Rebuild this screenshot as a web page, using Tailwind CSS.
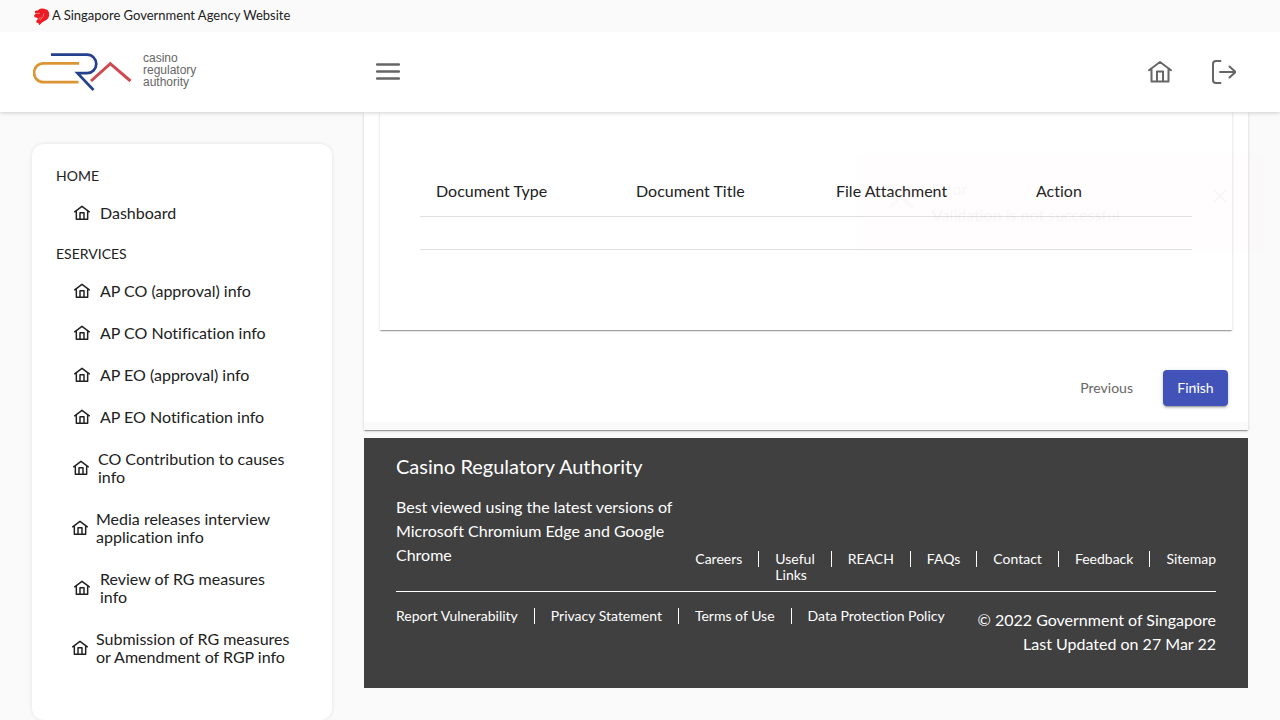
<!DOCTYPE html>
<html lang="en">
<head>
<meta charset="utf-8">
<meta name="viewport" content="width=device-width, initial-scale=1">
<title>Casino Regulatory Authority</title>
<script src="https://cdn.jsdelivr.net/npm/@tailwindcss/browser@4"></script>
</head>
<body class="flex min-h-screen flex-col bg-[#fafafa] font-[Lato,sans-serif] text-base text-[#212121] [font-variant-ligatures:none]">
<svg class="hidden" aria-hidden="true">
  <symbol id="house" viewBox="0 0 24 24" fill="none" stroke="currentColor" stroke-linecap="round" stroke-linejoin="round">
    <path d="M1 10.200 12 2l11 8.200M3.500 8.600V21.500h17V8.600M9 21.500v-10h6v10"/>
  </symbol>
</svg>

<div class="relative z-20 flex h-8 items-center bg-[#fafafa] px-8 pb-0.5">
  <a href="#" class="flex items-center gap-0.5 text-[13px] leading-4">
    <svg class="mt-1 ml-0.5 h-[18px] w-4" viewBox="0 0 16 18" aria-hidden="true">
      <path fill="#ed1c24" d="M1 3 4 2.200 6 .8 9 .6l2 .5 2.500 1L15 4.500l.2 3-1 2.800L12.300 12l-1.800 1-2.200 1.200-2.300 2.300L5 17.200l-.4-2-2-.5-.3-2 1.700-2-1-1-2.600-.4-.2-2L2 5.600 1 5z"/>
      <path fill="none" stroke="#fafafa" stroke-width=".4" d="m2 5.500 4-.2M6.500 9l-2 2.500M10 5.500l-1 3-3 4"/>
    </svg>
    <span>A Singapore Government Agency Website</span>
  </a>
</div>

<header class="relative z-10 flex h-20 items-center bg-white px-8 shadow-[0_1px_4px_rgba(0,0,0,0.18)]">
  <a href="#" class="flex w-[344px] items-center gap-2.5 pl-px" aria-label="Casino Regulatory Authority home">
    <svg class="h-10 w-[100px]" viewBox="0 0 100 40" fill="none" stroke-width="2.700" aria-hidden="true">
      <path stroke="#dc9533" d="M46 11.300H10.500a9 9 0 0 0 0 18.900h35"/>
      <path stroke="#24418e" d="M18 2.700h36a9 9 0 0 1 0 18.500H44.500L60.500 38"/>
      <path stroke="#cf4a50" stroke-width="3" d="m58 29 19.300-17.300L97.500 29"/>
    </svg>
    <span class="pb-1 font-['Liberation_Sans',sans-serif] text-xs leading-3 text-[#666]">casino<br>regulatory<br>authority</span>
  </a>
  <button type="button" aria-label="Toggle menu" class="text-[#666]">
    <svg class="h-6 w-6" viewBox="0 0 24 24" fill="none" stroke="currentColor" stroke-width="2.300" stroke-linecap="round"><path d="M1 4.500h22M1 11.500h22M1 18.500h22"/></svg>
  </button>
  <nav class="ml-auto flex items-center gap-10 pr-3 text-[#666]">
    <a href="#" aria-label="Home"><svg class="h-6 w-6" stroke-width="2"><use href="#house"/></svg></a>
    <a href="#" aria-label="Log out">
      <svg class="h-6 w-6" viewBox="0 0 24 24" fill="none" stroke="currentColor" stroke-width="2" stroke-linecap="round" stroke-linejoin="round"><path d="M8.500 1H4a3 3 0 0 0-3 3v16a3 3 0 0 0 3 3h4.500M8 12h15M17.500 6.500 23.500 12l-6 5.500"/></svg>
    </a>
  </nav>
</header>

<div class="flex flex-1 gap-8 px-8">
  <aside class="mt-8 w-[300px] shrink-0 rounded-xl bg-white pt-3 shadow-[0_0_4px_rgba(0,0,0,0.1)]">
    <nav>
      <h2 class="flex h-9 items-center px-6 pt-1 text-sm">HOME</h2>
      <ul class="pr-10 pl-8 leading-[18px]">
        <li><a href="#" class="flex items-center py-3"><span class="flex w-9 shrink-0 justify-center"><svg class="h-4 w-4" stroke-width="2.200"><use href="#house"/></svg></span><span>Dashboard</span></a></li>
      </ul>
      <h2 class="flex h-9 items-center px-6 pt-1 text-sm">ESERVICES</h2>
      <ul class="pr-10 pl-8 leading-[18px]">
        <li><a href="#" class="flex items-center py-3"><span class="flex w-9 shrink-0 justify-center"><svg class="h-4 w-4" stroke-width="2.200"><use href="#house"/></svg></span><span>AP CO (approval) info</span></a></li>
        <li><a href="#" class="flex items-center py-3"><span class="flex w-9 shrink-0 justify-center"><svg class="h-4 w-4" stroke-width="2.200"><use href="#house"/></svg></span><span>AP CO Notification info</span></a></li>
        <li><a href="#" class="flex items-center py-3"><span class="flex w-9 shrink-0 justify-center"><svg class="h-4 w-4" stroke-width="2.200"><use href="#house"/></svg></span><span>AP EO (approval) info</span></a></li>
        <li><a href="#" class="flex items-center py-3"><span class="flex w-9 shrink-0 justify-center"><svg class="h-4 w-4" stroke-width="2.200"><use href="#house"/></svg></span><span>AP EO Notification info</span></a></li>
        <li><a href="#" class="flex items-center py-3"><span class="flex w-[34px] shrink-0 justify-center"><svg class="h-4 w-4" stroke-width="2.200"><use href="#house"/></svg></span><span>CO Contribution to causes info</span></a></li>
        <li><a href="#" class="flex items-center py-3"><span class="flex w-8 shrink-0 justify-center"><svg class="h-4 w-4" stroke-width="2.200"><use href="#house"/></svg></span><span>Media releases interview application info</span></a></li>
        <li><a href="#" class="flex items-center py-3"><span class="flex w-9 shrink-0 justify-center"><svg class="h-4 w-4" stroke-width="2.200"><use href="#house"/></svg></span><span>Review of RG measures info</span></a></li>
        <li><a href="#" class="flex items-center py-3"><span class="flex w-8 shrink-0 justify-center"><svg class="h-4 w-4" stroke-width="2.200"><use href="#house"/></svg></span><span>Submission of RG measures or Amendment of RGP info</span></a></li>
      </ul>
    </nav>
  </aside>

  <div class="min-w-0 flex-1 pb-8">
    <main class="pb-2 shadow-[0_2px_1px_-1px_rgba(0,0,0,0.2),0_1px_1px_rgba(0,0,0,0.14),0_1px_3px_rgba(0,0,0,0.12)]">
      <div class="bg-white px-4 pb-4">
        <section class="px-10 pt-[54px] pb-20 shadow-[0_2px_1px_-1px_rgba(0,0,0,0.2),0_1px_1px_rgba(0,0,0,0.14),0_1px_3px_rgba(0,0,0,0.12)]">
          <table class="w-full table-fixed text-left">
            <thead>
              <tr class="h-[50px] border-b border-[#e0e0e0]">
                <th scope="col" class="w-[200px] px-4 font-normal">Document Type</th>
                <th scope="col" class="w-[200px] px-4 font-normal">Document Title</th>
                <th scope="col" class="w-[200px] px-4 font-normal">File Attachment</th>
                <th scope="col" class="px-4 font-normal">Action</th>
              </tr>
            </thead>
            <tbody>
              <tr class="h-[33px] border-b border-[#e0e0e0]"><td></td><td></td><td></td><td></td></tr>
            </tbody>
          </table>
        </section>
        <div class="mt-10 flex justify-end gap-4 pr-1 text-sm">
          <button type="button" class="h-9 px-3.5 text-[#666]">Previous</button>
          <button type="button" class="relative h-9 min-w-[65px] rounded bg-[#4153b8] px-3.5 text-white shadow-[0_3px_1px_-2px_rgba(0,0,0,0.2),0_2px_2px_rgba(0,0,0,0.14),0_1px_5px_rgba(0,0,0,0.12)]">Finish
            <svg class="absolute inset-0 m-auto h-2 w-2" viewBox="0 0 8 8" fill="none" stroke="#fff" stroke-opacity=".6" aria-hidden="true"><path d="M.5 2.500 3 1.500v5M4 2h3l-1 2 1 3"/></svg>
          </button>
        </div>
      </div>
    </main>

    <footer class="mt-2 bg-[#404040] px-8 pt-4 pb-8 text-white">
      <div class="flex items-end border-b border-white pb-2">
        <div class="w-[280px] shrink-0 pb-4">
          <h2 class="text-xl leading-6">Casino Regulatory Authority</h2>
          <p class="mt-[17px] leading-6">Best viewed using the latest versions of Microsoft Chromium Edge and Google Chrome</p>
        </div>
        <ul class="ml-auto flex items-start text-sm leading-4">
          <li class="border-r border-white pr-4"><a href="#">Careers</a></li>
          <li class="px-4"><a href="#">Useful<br>Links</a></li>
          <li class="border-l border-white px-4"><a href="#">REACH</a></li>
          <li class="border-l border-white px-4"><a href="#">FAQs</a></li>
          <li class="border-l border-white px-4"><a href="#">Contact</a></li>
          <li class="border-l border-white px-4"><a href="#">Feedback</a></li>
          <li class="border-l border-white pl-4"><a href="#">Sitemap</a></li>
        </ul>
      </div>
      <div class="flex justify-between pt-4">
        <ul class="flex items-start text-sm leading-4">
          <li class="pr-4"><a href="#">Report Vulnerability</a></li>
          <li class="border-l border-white px-4"><a href="#">Privacy Statement</a></li>
          <li class="border-l border-white px-4"><a href="#">Terms of Use</a></li>
          <li class="border-l border-white px-4"><a href="#">Data Protection Policy</a></li>
        </ul>
        <p class="text-right leading-6">© 2022 Government of Singapore<br>Last Updated on 27 Mar 22</p>
      </div>
    </footer>
  </div>
</div>

<div role="alert" class="absolute top-[157px] right-5 z-20 flex h-[93px] w-[400px] items-start rounded bg-[#ffc8d2] pt-[19px] pr-8 pl-7 opacity-[0.03] shadow-[0_0_4px_rgba(0,0,0,0.3)]">
  <svg class="mt-1.5 h-7 w-7" viewBox="0 0 28 28" fill="none" stroke="#8a7440" stroke-width="3" aria-hidden="true"><path d="m1 3 24 23M25 3 1 26"/></svg>
  <div class="ml-4 leading-[26px]">
    <p>Error</p>
    <p>Validation is not successful</p>
  </div>
  <button type="button" aria-label="Close" class="mt-3 ml-auto"><svg class="h-4 w-4" viewBox="0 0 16 16" fill="none" stroke="#000" stroke-width="1.500"><path d="m2 2 12 12M14 2 2 14"/></svg></button>
</div>
</body>
</html>
